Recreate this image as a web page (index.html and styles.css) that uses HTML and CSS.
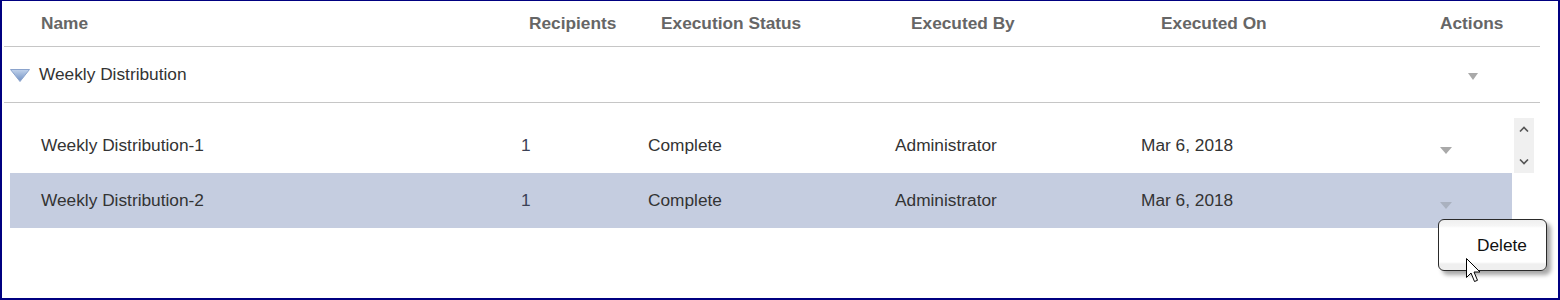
FILE: index.html
```html
<!DOCTYPE html>
<html lang="en">

<head>
    <meta charset="UTF-8">
    <title>Distribution History</title>
    <link rel="stylesheet" href="styles.css">
</head>

<body>
    <div class="frame">
        <div class="table">
            <div class="head-row">
                <div class="hcell first">Name</div>
                <div class="hcell">Recipients</div>
                <div class="hcell">Execution Status</div>
                <div class="hcell">Executed By</div>
                <div class="hcell">Executed On</div>
                <div class="hcell">Actions</div>
            </div>
            <div class="group-row">
                <svg class="expander" width="20" height="13" viewBox="0 0 20 13">
                    <defs>
                        <linearGradient id="exp" x1="0" y1="0" x2="0" y2="1">
                            <stop offset="0" stop-color="#c2d3ec" />
                            <stop offset="1" stop-color="#6f90c2" />
                        </linearGradient>
                    </defs>
                    <polygon points="0.5,0.5 19.5,0.5 10,12.5" fill="url(#exp)" stroke="#8aa3cc" stroke-width="1" />
                </svg>
                <span class="group-name">Weekly Distribution</span>
                <span class="caret group-caret"></span>
            </div>
        </div>

        <div class="body">
            <div class="rows">
                <div class="row">
                    <div class="cell first">Weekly Distribution-1</div>
                    <div class="cell num">1</div>
                    <div class="cell">Complete</div>
                    <div class="cell">Administrator</div>
                    <div class="cell">Mar 6, 2018</div>
                    <div class="cell"><span class="caret row-caret"></span></div>
                </div>
                <div class="row selected">
                    <div class="cell first">Weekly Distribution-2</div>
                    <div class="cell num">1</div>
                    <div class="cell">Complete</div>
                    <div class="cell">Administrator</div>
                    <div class="cell">Mar 6, 2018</div>
                    <div class="cell"><span class="caret row-caret"></span></div>
                </div>
            </div>
            <div class="scrollbar">
                <svg width="10" height="6" viewBox="0 0 10 6"><polyline points="1,5.5 5,1.5 9,5.5" fill="none" stroke="#555" stroke-width="1.6" /></svg>
                <svg width="10" height="6" viewBox="0 0 10 6"><polyline points="1,0.5 5,4.5 9,0.5" fill="none" stroke="#555" stroke-width="1.6" /></svg>
            </div>
        </div>

        <div class="menu">
            <div class="menu-item">Delete</div>
        </div>

        <!-- mouse pointer over the menu -->
        <svg class="cursor" width="16" height="26" viewBox="0 0 16 26">
            <path d="M0.5 0.5 V19.5 L5 15 L8.5 23.5 L11.5 22.3 L8 14 H14 Z" fill="#fff" stroke="#000" stroke-width="1" stroke-linejoin="miter" />
        </svg>
    </div>
</body>

</html>
```

FILE: styles.css
```css
body {
    margin: 0;
    font-family: "Liberation Sans", Arial, sans-serif;
    font-size: 17.3px;
    color: #333;
    background: #fff;
}

.frame {
    position: relative;
    width: 1560px;
    height: 300px;
    box-sizing: border-box;
    border: 2px solid #000080;
    border-top-width: 1px;
    overflow: hidden;
}

.table {
    margin-left: 2px;
    width: 1536px;
}

.head-row {
    display: grid;
    grid-template-columns: 525px 132px 250px 250px 279px 100px;
    height: 45px;
    align-items: center;
    border-bottom: 1px solid #c6c6c6;
}

.hcell {
    font-weight: bold;
    color: #666;
    white-space: nowrap;
}

.hcell.first {
    padding-left: 37px;
}

.group-row {
    display: flex;
    align-items: center;
    height: 55px;
    border-bottom: 1px solid #c6c6c6;
}

.expander {
    margin-left: 6px;
    margin-top: 1px;
}

.group-name {
    margin-left: 9px;
}

.caret {
    display: inline-block;
    width: 0;
    height: 0;
    border-left: 6px solid transparent;
    border-right: 6px solid transparent;
    border-top: 7px solid #a9a9a9;
}

.group-caret {
    margin-left: auto;
    margin-right: 62px;
    margin-top: 4px;
    border-left-width: 5.5px;
    border-right-width: 5.5px;
}

.body {
    display: flex;
    gap: 2px;
    margin-left: 8px;
    padding-top: 15px;
}

.rows {
    width: 1502px;
}

.row {
    display: grid;
    grid-template-columns: 511px 127px 247px 246px 299px 72px;
    height: 55px;
    align-items: center;
}

.row.selected {
    background: #c5cde0;
}

.row.selected .row-caret {
    border-top-color: #aab1bf;
}

.cell {
    white-space: nowrap;
}

.cell.first {
    padding-left: 31px;
}

.cell.num {
    color: #3c4256;
}

.row-caret {
    margin-top: 14px;
}

.scrollbar {
    width: 20px;
    height: 55px;
    background: #f0f0f0;
    display: flex;
    flex-direction: column;
    justify-content: space-between;
    align-items: center;
    padding: 8px 0;
    box-sizing: border-box;
}

.menu {
    position: absolute;
    left: 1436px;
    top: 218px;
    width: 109px;
    height: 52px;
    box-sizing: border-box;
    border: 1px solid #2a2a2a;
    border-radius: 6px;
    background: linear-gradient(#efefef 0, #f6f6f6 6px, #fff 8px, #fff 42px, #efefef 44px);
    box-shadow: 4px 4px 4px rgba(0, 0, 0, 0.35);
    display: flex;
    align-items: center;
}

.menu-item {
    padding-left: 38px;
    color: #111;
    margin-top: 1px;
}

.cursor {
    position: absolute;
    left: 1464px;
    top: 257px;
}
```
